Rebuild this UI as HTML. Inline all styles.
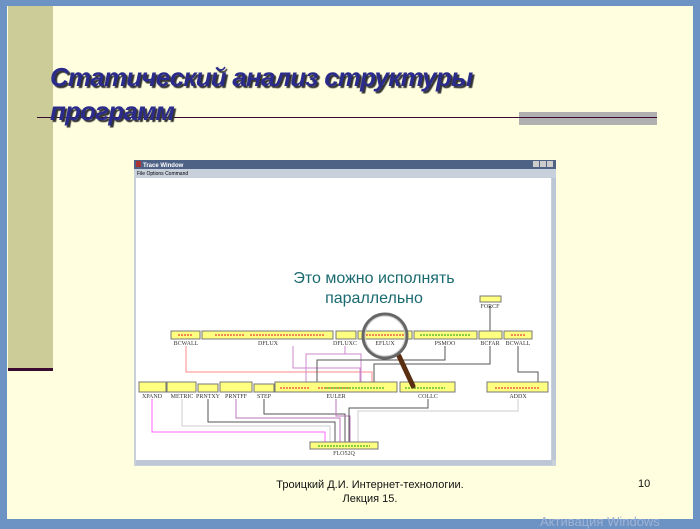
<!DOCTYPE html>
<html><head><meta charset="utf-8"><style>
body{margin:0;width:700px;height:528px;background:#6d93c4;overflow:hidden;position:relative;font-family:"Liberation Sans",sans-serif}
.slide{position:absolute;left:7px;top:6px;width:686px;height:513px;background:#ffffe0}
.bar{position:absolute;left:8px;top:6px;width:45px;height:363px;background:#cccc99}
.bar2{position:absolute;left:8px;top:368px;width:45px;height:3px;background:#3a0a30}
.title{position:absolute;left:50px;top:60px;font-size:26px;font-style:italic;font-weight:bold;color:#2b2b8c;line-height:34px;text-shadow:2px 2px 1px #333;letter-spacing:-0.8px}
.hl{position:absolute;left:37px;top:117px;width:620px;height:1px;background:#3a0a30}
.gb{position:absolute;left:519px;top:112px;width:138px;height:13px;background:#b0b0b0}
.foot{position:absolute;left:250px;top:478px;width:240px;text-align:center;font-size:11px;line-height:14px;color:#111}
.num{position:absolute;left:638px;top:478px;font-size:11px;color:#111}
.act{position:absolute;left:540px;top:514px;font-size:13px;color:#9fb3d6}
</style></head><body>
<div class="slide"></div>
<div class="bar"></div><div class="bar2"></div>
<div class="gb"></div><div class="hl"></div>
<div class="title">Статический анализ структуры<br>программ</div>
<svg style="position:absolute;left:0;top:0" width="700" height="528" font-family="Liberation Serif">
<rect x="134" y="160" width="422" height="306" fill="#c8d0dc"/>
<rect x="134" y="160" width="422" height="9" fill="#4e6285"/>
<text x="143" y="167" font-size="6" fill="#fff" font-family="Liberation Sans" font-weight="bold">Trace Window</text>
<rect x="136" y="161" width="5" height="6" fill="#a33"/>
<rect x="533" y="161" width="6" height="6" fill="#ccc"/><rect x="540" y="161" width="6" height="6" fill="#ccc"/><rect x="547" y="161" width="6" height="6" fill="#ccc"/>
<text x="137" y="175" font-size="5" fill="#000" font-family="Liberation Sans">File   Options   Command</text>
<rect x="136" y="178" width="415" height="282" fill="#fff"/>
<rect x="552" y="178" width="4" height="282" fill="#bcc6d4"/>
<rect x="136" y="460" width="416" height="5" fill="#bcc6d4"/>
<text x="374" y="283" font-size="16" fill="#1a6a70" text-anchor="middle" font-family="Liberation Sans">Это можно исполнять</text>
<text x="374" y="303" font-size="16" fill="#1a6a70" text-anchor="middle" font-family="Liberation Sans">параллельно</text>
<g fill="none" stroke-width="1">
<path d="M186 346V372H372V390" stroke="#f88"/>
<path d="M293 346V368H360V390" stroke="#c8c"/>
<path d="M345 346V354H306V390M345 354H361V390" stroke="#c8c"/>
<path d="M445 346V360H317V390" stroke="#555"/>
<path d="M490 346V364H374V390" stroke="#555"/>
<path d="M518 346V372H538V390" stroke="#555"/>
<path d="M490 306V334" stroke="#555"/>
<path d="M152 399V432H325V447" stroke="#f6f"/>
<path d="M182 399V426H330V447" stroke="#ccc"/>
<path d="M208 399V422H335V447" stroke="#555"/>
<path d="M236 399V418H340V447" stroke="#b7b"/>
<path d="M264 399V414H345V447" stroke="#555"/>
<path d="M336 399V416H350V447" stroke="#b7b"/>
<path d="M428 399V408H349V447" stroke="#555"/>
<path d="M518 399V411H358V447" stroke="#ccc"/>
</g>
<g fill="#ffff80" stroke="#777" stroke-width="1">
<rect x="171" y="331" width="29" height="8"/><rect x="202" y="331" width="131" height="8"/><rect x="336" y="331" width="20" height="8"/><rect x="358" y="331" width="54" height="8"/><rect x="414" y="331" width="63" height="8"/><rect x="479" y="331" width="23" height="8"/><rect x="504" y="331" width="28" height="8"/>
<rect x="480" y="296" width="21" height="6"/>
<rect x="139" y="382" width="27" height="10"/><rect x="167" y="382" width="29" height="10"/><rect x="198" y="384" width="20" height="8"/><rect x="220" y="382" width="32" height="10"/><rect x="254" y="384" width="20" height="8"/><rect x="275" y="382" width="122" height="10"/><rect x="400" y="382" width="55" height="10"/><rect x="487" y="382" width="61" height="10"/>
<rect x="310" y="442" width="68" height="7"/>
</g>
<g stroke-width="2" stroke-dasharray="2 1" fill="none">
<path d="M215 335H244" stroke="#e85"/><path d="M250 335H325" stroke="#e85"/><path d="M363 335H405" stroke="#e85"/><path d="M420 335H470" stroke="#8c4"/><path d="M280 388H310M318 388H350" stroke="#e85"/><path d="M325 388H385" stroke="#8c4"/><path d="M405 388H445" stroke="#8c4"/><path d="M495 388H540" stroke="#e85"/><path d="M318 446H370" stroke="#8c4"/><path d="M178 335H193M511 335H526" stroke="#e85"/>
</g>
<g font-size="6" fill="#333" text-anchor="middle">
<text x="186" y="345">BCWALL</text><text x="268" y="345">DFLUX</text><text x="345" y="345">DFLUXC</text><text x="385" y="345">EFLUX</text><text x="445" y="345">PSMOO</text><text x="490" y="345">BCFAR</text><text x="518" y="345">BCWALL</text><text x="490" y="308">FORCF</text>
<text x="152" y="398">XPAND</text><text x="182" y="398">METRIC</text><text x="208" y="398">PRNTXY</text><text x="236" y="398">PRNTFF</text><text x="264" y="398">STEP</text><text x="336" y="398">EULER</text><text x="428" y="398">COLLC</text><text x="518" y="398">ADDX</text><text x="344" y="455">FLO52Q</text>
</g>
<line x1="399" y1="356" x2="413" y2="386" stroke="#5a2e10" stroke-width="5" stroke-linecap="round"/>
<circle cx="385" cy="336" r="22" fill="none" stroke="#666" stroke-width="3"/>
<circle cx="385" cy="336" r="20" fill="none" stroke="#ccc" stroke-width="1"/>
</svg>
<div class="foot">Троицкий Д.И. Интернет-технологии.<br>Лекция 15.</div>
<div class="num">10</div>
<div class="act">Активация Windows</div>
</body></html>
